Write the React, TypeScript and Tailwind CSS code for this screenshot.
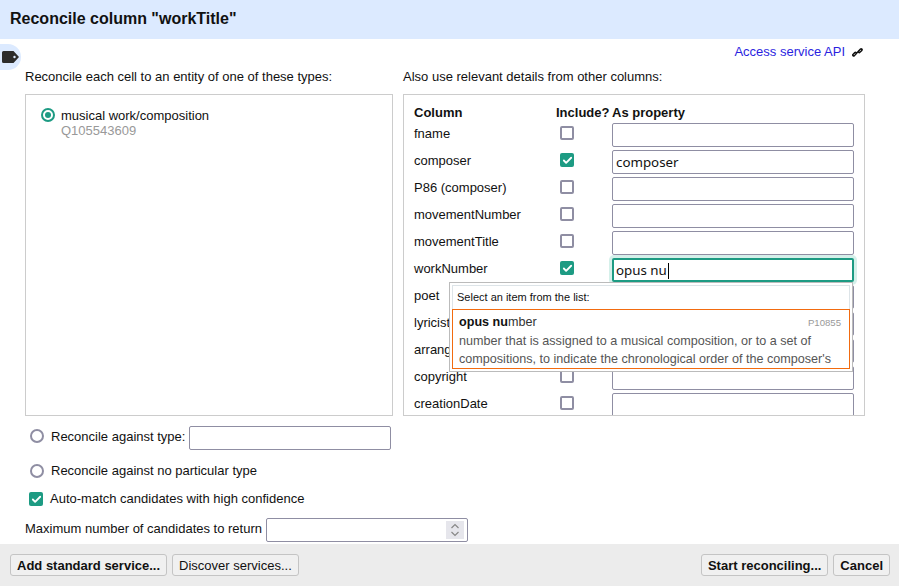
import React from 'react'
import { Check } from 'lucide-react'

const columns = [
  { name: 'fname', checked: false, value: '' },
  { name: 'composer', checked: true, value: 'composer' },
  { name: 'P86 (composer)', checked: false, value: '' },
  { name: 'movementNumber', checked: false, value: '' },
  { name: 'movementTitle', checked: false, value: '' },
  { name: 'workNumber', checked: true, value: 'opus nu', focused: true },
  { name: 'poet', checked: false, value: '' },
  { name: 'lyricist', checked: false, value: '' },
  { name: 'arranger', checked: false, value: '' },
  { name: 'copyright', checked: false, value: '' },
  { name: 'creationDate', checked: false, value: '' },
]

function CheckBox({ checked }: { checked: boolean }) {
  if (checked) {
    return (
      <span className="flex h-[14px] w-[14px] items-center justify-center rounded-[2px] bg-[#1d9b83]">
        <Check size={11} strokeWidth={4} className="text-white" />
      </span>
    )
  }
  return <span className="block h-[14px] w-[14px] rounded-[2px] border-2 border-[#8f8ea3] bg-white" />
}

function Radio({ checked }: { checked?: boolean }) {
  if (checked) {
    return (
      <span className="flex h-[14px] w-[14px] items-center justify-center rounded-full border-2 border-[#1d9b83] bg-white">
        <span className="h-[6px] w-[6px] rounded-full bg-[#1d9b83]" />
      </span>
    )
  }
  return <span className="block h-[14px] w-[14px] rounded-full border-2 border-[#8f8ea3] bg-white" />
}

function TextBox({ value, focused, className }: { value?: string; focused?: boolean; className?: string }) {
  return (
    <div
      className={
        (focused
          ? 'border-2 border-[#1d9b83] shadow-[0_0_0_3px_#d5f0ea] px-[2px] '
          : 'border border-[#8f8ea3] px-[3px] ') +
        "flex h-6 items-center rounded-[2px] bg-white pt-px font-['Noto_Sans'] text-[13.33px] text-[#111] " +
        (className ?? '')
      }
    >
      {value}
      {focused && <span className="ml-px inline-block h-4 w-px bg-black" />}
    </div>
  )
}

function Btn({ children, bold }: { children: React.ReactNode; bold?: boolean }) {
  return (
    <button
      className={
        'h-[22px] rounded-[3px] border border-[#c4c4c4] bg-[#f0f0f0] px-[6px] text-[13px] leading-none text-[#111] ' +
        (bold ? 'font-bold' : '')
      }
    >
      {children}
    </button>
  )
}

export default function App() {
  return (
    <div className="relative flex h-[586px] w-[899px] flex-col overflow-hidden bg-white font-['Liberation_Sans',sans-serif] text-[13px] text-[#111]">
      <div className="flex h-[39px] shrink-0 items-center bg-[#dceaff] pb-px pl-[10px] text-base font-bold">
        Reconcile column "workTitle"
      </div>

      {/* tag tab */}
      <div className="absolute left-0 top-[44px] flex h-[26px] w-[21px] items-center rounded-r-full bg-[#dceaff] pl-[2px]">
        <svg width="17" height="12" viewBox="0 0 17 12">
          <path
            fillRule="evenodd"
            fill="#2b2b2b"
            d="M1.5 0H11.5L17 6L11.5 12H1.5Q0 12 0 10.5V1.5Q0 0 1.5 0ZM12.5 4.8a1.2 1.2 0 1 0 0 2.4a1.2 1.2 0 1 0 0-2.4Z"
          />
        </svg>
      </div>

      <div className="flex h-[505px] flex-col">
        <div className="flex h-[25px] items-center justify-end pr-[36px] pt-[1px]">
          <span className="text-[#2b1fe0]">Access service API</span>
          <svg className="ml-[7px]" width="11" height="11" viewBox="0 0 12 11" fill="none" stroke="#111">
            <path d="M1.8 8.3L3.8 6.2" strokeWidth="3.6" strokeLinecap="round" />
            <path d="M7.9 4.6L10 2.5" strokeWidth="3.6" strokeLinecap="round" />
            <path d="M4.2 6.8L7.6 3.8" strokeWidth="1.6" />
            <path d="M2.2 8L3.4 6.7M8.3 4.2L9.6 2.9" strokeWidth="1" stroke="#fff" />
          </svg>
        </div>

        <div className="flex pl-[25px]">
          <div className="w-[368px]">
            <div className="mb-[10px] mt-[5px] leading-[15px]">Reconcile each cell to an entity of one of these types:</div>
            <div className="h-[322px] border border-[#ccc] pl-[15px] pt-[13px]">
              <div className="flex gap-[6px]">
                <Radio checked />
                <div className="leading-[15px]">
                  <div>musical work/composition</div>
                  <div className="text-[#999]">Q105543609</div>
                </div>
              </div>
            </div>
          </div>

          <div className="ml-[10px] w-[462px]">
            <div className="mb-[10px] mt-[5px] leading-[15px]">Also use relevant details from other columns:</div>
            <div className="relative h-[322px] overflow-hidden border border-[#ccc] pl-[10px]">
              <div className="flex h-[28px] items-start pt-[10px] font-bold leading-[15px]">
                <span className="w-[142px]">Column</span>
                <span className="w-[56px]">Include?</span>
                <span>As property</span>
              </div>
              <div className="flex flex-col gap-[3px]">
                {columns.map((c) => (
                  <div key={c.name} className="flex h-6 shrink-0 items-center">
                    <span className="w-[146px] pb-[2px]">{c.name}</span>
                    <div className="w-[52px] pb-[4px]">
                      <CheckBox checked={c.checked} />
                    </div>
                    <TextBox value={c.value} focused={c.focused} className="w-[242px]" />
                  </div>
                ))}
              </div>

              {/* suggest popup */}
              <div className="absolute left-[45px] top-[187px] h-[90px] w-[404px] border border-[#bbb] bg-white p-[2px]">
                <div className="flex h-[24px] items-center border border-b-0 border-[#dde4e8] pl-[4px] text-[11px]">
                  Select an item from the list:
                </div>
                <div className="h-[60px] border border-[#f26b0f] px-[6px] pt-[3px]">
                  <div className="flex items-center justify-between leading-[19px]">
                    <span className="text-[12.6px] text-[#333]">
                      <b className="text-[#111]">opus nu</b>mber
                    </span>
                    <span className="pr-[2px] text-[9.6px] text-[#999]">P10855</span>
                  </div>
                  <div className="text-[12.6px] leading-[18px] text-[#555]">
                    number that is assigned to a musical composition, or to a set of
                    <br />
                    compositions, to indicate the chronological order of the composer's
                  </div>
                </div>
              </div>
            </div>
          </div>
        </div>

        <div className="mt-[10px] flex h-6 items-center pl-[30px]">
          <div className="pb-[4px]">
            <Radio />
          </div>
          <span className="ml-[7px] pb-[3px]">Reconcile against type:</span>
          <TextBox className="ml-[4px] w-[202px]" />
        </div>
        <div className="mt-[12px] flex h-[17px] items-center pl-[30px]">
          <Radio />
          <span className="ml-[7px]">Reconcile against no particular type</span>
        </div>
        <div className="mt-[12px] flex h-[16px] items-center pl-[29px]">
          <CheckBox checked />
          <span className="ml-[7px]">Auto-match candidates with high confidence</span>
        </div>
        <div className="mt-[11px] flex h-6 items-center pl-[25px]">
          <span className="mr-[4px] pb-[3px]">Maximum number of candidates to return</span>
          <div className="flex h-6 w-[202px] items-center justify-end rounded-[2px] border border-[#8f8ea3] bg-white pr-[3px]">
            <div className="flex h-[18px] w-[18px] items-center justify-center bg-[#e6e6ec]">
              <svg width="10" height="14" viewBox="0 0 10 14" fill="none" stroke="#888" strokeWidth="1.2">
                <path d="M1.5 5L5 1.5L8.5 5" />
                <path d="M1.5 9L5 12.5L8.5 9" />
              </svg>
            </div>
          </div>
        </div>
      </div>

      <div className="flex h-[42px] shrink-0 items-center justify-between bg-[#ececec] px-[9px] pl-[10px]">
        <div className="flex gap-[5px]">
          <Btn bold>Add standard service...</Btn>
          <Btn>Discover services...</Btn>
        </div>
        <div className="flex gap-[5px]">
          <Btn bold>Start reconciling...</Btn>
          <Btn bold>Cancel</Btn>
        </div>
      </div>
    </div>
  )
}
